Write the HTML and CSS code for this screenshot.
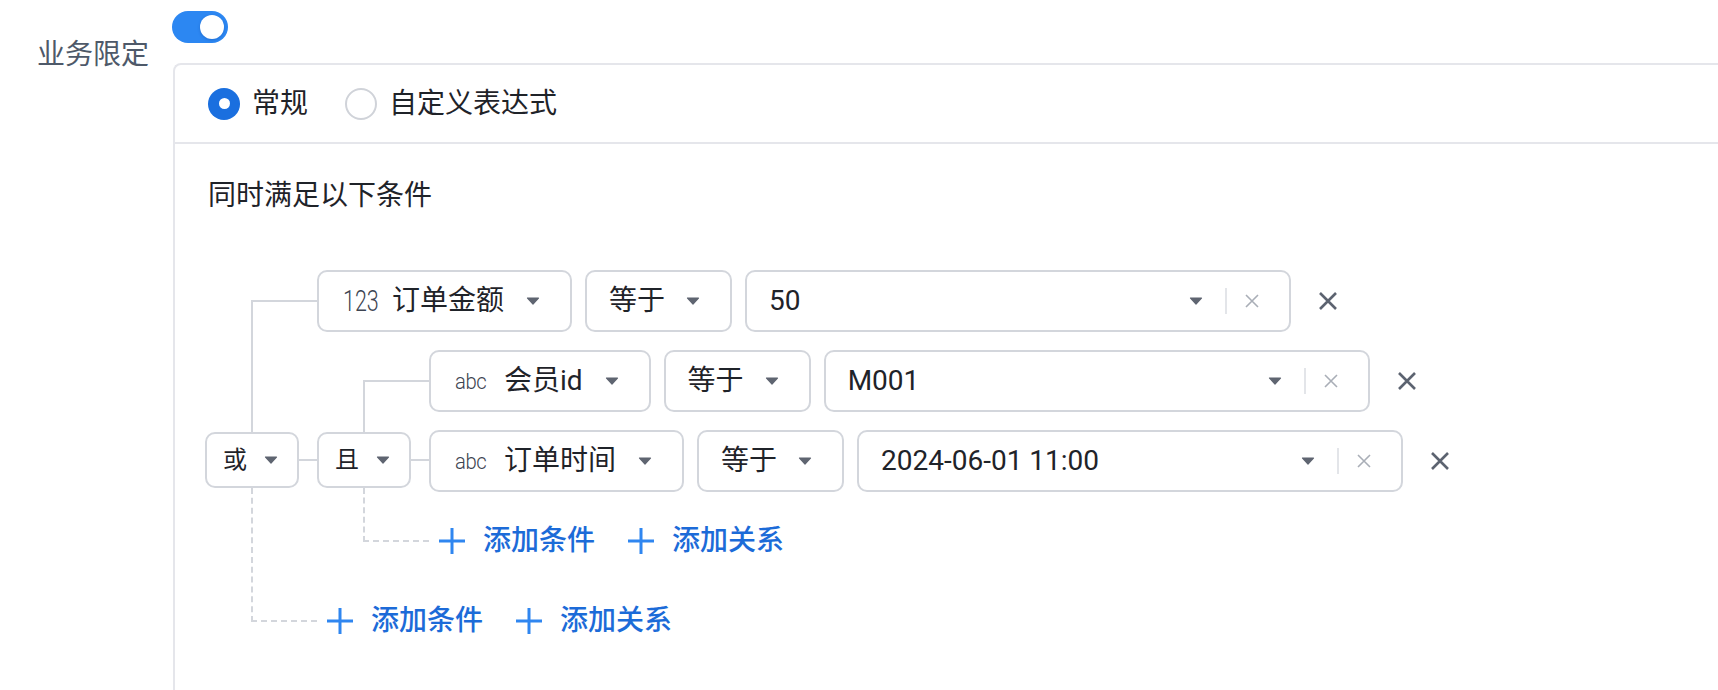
FILE: index.html
```html
<!DOCTYPE html>
<html lang="zh-CN">
<head>
<meta charset="utf-8">
<title>业务限定</title>
<link rel="stylesheet" href="styles.css">
</head>
<body>
<div class="page">
  <div class="label">业务限定</div>
  <div class="content">
    <div class="switch"><span class="knob"></span></div>
    <div class="panel">
      <div class="mode-row">
        <label class="radio checked"><span class="dot"></span><span class="radio-text">常规</span></label>
        <label class="radio"><span class="dot"></span><span class="radio-text">自定义表达式</span></label>
      </div>
      <div class="panel-body">
        <div class="title">同时满足以下条件</div>
        <div class="tree">
          <div class="group root">
            <div class="rel-col">
              <div class="select rel"><span class="rel-text">或</span><svg class="caret" viewBox="0 0 14 8"><path d="M1.5 1 H12.5 L7 7 Z"/></svg></div>
              <span class="rel-link"></span>
            </div>
            <div class="children">
              <div class="row">
                <div class="select field"><span class="tag"><span class="tag-num">123</span></span><span class="name">订单金额</span><svg class="caret" viewBox="0 0 14 8"><path d="M1.5 1 H12.5 L7 7 Z"/></svg></div>
                <div class="select op"><span class="name">等于</span><svg class="caret" viewBox="0 0 14 8"><path d="M1.5 1 H12.5 L7 7 Z"/></svg></div>
                <div class="select value"><span class="val">50</span><svg class="caret" viewBox="0 0 14 8"><path d="M1.5 1 H12.5 L7 7 Z"/></svg><span class="vsep"></span><svg class="clear" viewBox="0 0 16 16"><path d="M2 2 L14 14 M14 2 L2 14"/></svg></div>
                <svg class="remove" viewBox="0 0 20 20"><path d="M2 2 L18 18 M18 2 L2 18"/></svg>
              </div>
              <div class="group">
                <div class="rel-col">
                  <div class="select rel"><span class="rel-text">且</span><svg class="caret" viewBox="0 0 14 8"><path d="M1.5 1 H12.5 L7 7 Z"/></svg></div>
                  <span class="rel-link"></span>
                </div>
                <div class="children">
                  <div class="row">
                    <div class="select field"><span class="tag"><span class="tag-abc">abc</span></span><span class="name">会员id</span><svg class="caret" viewBox="0 0 14 8"><path d="M1.5 1 H12.5 L7 7 Z"/></svg></div>
                    <div class="select op"><span class="name">等于</span><svg class="caret" viewBox="0 0 14 8"><path d="M1.5 1 H12.5 L7 7 Z"/></svg></div>
                    <div class="select value"><span class="val">M001</span><svg class="caret" viewBox="0 0 14 8"><path d="M1.5 1 H12.5 L7 7 Z"/></svg><span class="vsep"></span><svg class="clear" viewBox="0 0 16 16"><path d="M2 2 L14 14 M14 2 L2 14"/></svg></div>
                    <svg class="remove" viewBox="0 0 20 20"><path d="M2 2 L18 18 M18 2 L2 18"/></svg>
                  </div>
                  <div class="row">
                    <div class="select field"><span class="tag"><span class="tag-abc">abc</span></span><span class="name">订单时间</span><svg class="caret" viewBox="0 0 14 8"><path d="M1.5 1 H12.5 L7 7 Z"/></svg></div>
                    <div class="select op"><span class="name">等于</span><svg class="caret" viewBox="0 0 14 8"><path d="M1.5 1 H12.5 L7 7 Z"/></svg></div>
                    <div class="select value"><span class="val">2024-06-01 11:00</span><svg class="caret" viewBox="0 0 14 8"><path d="M1.5 1 H12.5 L7 7 Z"/></svg><span class="vsep"></span><svg class="clear" viewBox="0 0 16 16"><path d="M2 2 L14 14 M14 2 L2 14"/></svg></div>
                    <svg class="remove" viewBox="0 0 20 20"><path d="M2 2 L18 18 M18 2 L2 18"/></svg>
                  </div>
                  <div class="add-row">
                    <span class="add"><svg class="plus" viewBox="0 0 26 26"><path d="M13 0 V26 M0 13 H26"/></svg><span>添加条件</span></span>
                    <span class="add"><svg class="plus" viewBox="0 0 26 26"><path d="M13 0 V26 M0 13 H26"/></svg><span>添加关系</span></span>
                  </div>
                </div>
              </div>
              <div class="add-row outer">
                <span class="add"><svg class="plus" viewBox="0 0 26 26"><path d="M13 0 V26 M0 13 H26"/></svg><span>添加条件</span></span>
                <span class="add"><svg class="plus" viewBox="0 0 26 26"><path d="M13 0 V26 M0 13 H26"/></svg><span>添加关系</span></span>
              </div>
            </div>
          </div>
        </div>
      </div>
    </div>
  </div>
</div>
</body>
</html>
```

FILE: styles.css
```css
html, body {
  margin: 0;
  padding: 0;
  background: #ffffff;
  overflow: hidden;
}
body {
  font-family: Roboto, "Noto Sans CJK SC", sans-serif;
  font-size: 28px;
  line-height: 40px;
  color: #1f2329;
}
.page {
  display: flex;
  padding: 11px 0 0 37px;
  height: 760px;
  box-sizing: border-box;
}
.label {
  width: 136px;
  flex: none;
  margin-top: 24px;
  color: #4e5969;
}
.content {
  flex: 1;
  display: flex;
  flex-direction: column;
}
.switch {
  width: 56px;
  height: 32px;
  border-radius: 16px;
  background: #2c87f2;
  display: flex;
  align-items: center;
  justify-content: flex-end;
  padding-right: 4px;
  box-sizing: border-box;
  margin-left: -1px;
}
.knob {
  width: 24px;
  height: 24px;
  border-radius: 50%;
  background: #ffffff;
  box-shadow: 0 1px 3px rgba(0, 40, 120, 0.25);
}
.panel {
  margin-top: 20px;
  flex: 1;
  border: 2px solid #e5e6eb;
  border-right: none;
  border-bottom: none;
  border-top-left-radius: 8px;
  margin-right: -20px;
}
.mode-row {
  height: 77px;
  display: flex;
  align-items: center;
  padding-left: 33px;
  border-bottom: 2px solid #e5e6eb;
  gap: 37px;
}
.radio {
  display: flex;
  align-items: center;
  gap: 12px;
}
.dot {
  width: 32px;
  height: 32px;
  border-radius: 50%;
  box-sizing: border-box;
  border: 2px solid #d0d3d9;
  background: #ffffff;
  display: flex;
  align-items: center;
  justify-content: center;
}
.radio.checked .dot {
  border: none;
  background: #1a6fdf;
}
.radio.checked .dot::after {
  content: "";
  width: 11px;
  height: 11px;
  border-radius: 50%;
  background: #ffffff;
}
.panel-body {
  padding: 32px 0 0 33px;
}
.title {
  height: 40px;
}
.tree {
  margin-top: 54px;
  margin-left: -3px;
}
.group {
  display: flex;
  align-items: stretch;
}
.rel-col {
  position: relative;
  display: flex;
  align-items: center;
  margin-right: 18px;
  flex: none;
}
.rel-col::before {
  content: "";
  position: absolute;
  left: 46px;
  top: 30px;
  bottom: calc(50% + 28px);
  width: 64px;
  border-left: 2px solid #d3d6dc;
  border-top: 2px solid #d3d6dc;
}
.rel-col::after {
  content: "";
  position: absolute;
  left: 46px;
  top: calc(50% + 28px);
  bottom: 27px;
  width: 64px;
  border-left: 2px dashed #d3d6dc;
  border-bottom: 2px dashed #d3d6dc;
}
.rel-link {
  position: absolute;
  left: 94px;
  width: 18px;
  top: calc(50% - 1px);
  height: 2px;
  background: #d3d6dc;
}
.children {
  display: flex;
  flex-direction: column;
  gap: 18px;
}
.row {
  display: flex;
  align-items: center;
  gap: 13px;
  height: 62px;
}
.select {
  box-sizing: border-box;
  height: 62px;
  border: 2px solid #d3d6dc;
  border-radius: 10px;
  display: flex;
  align-items: center;
  background: #ffffff;
  flex: none;
}
.caret {
  width: 14px;
  height: 8px;
  flex: none;
}
.caret path {
  fill: #5f6571;
  stroke: #5f6571;
  stroke-width: 1.2;
  stroke-linejoin: round;
}
.select.rel {
  height: 56px;
  width: 94px;
  padding: 0 21px 0 16px;
  font-size: 24px;
}
.rel-text {
  width: 24px;
  margin-right: 17px;
}
.select.field {
  padding: 0 30px 0 24px;
}
.tag {
  width: 36px;
  margin-right: 13px;
  flex: none;
  color: #3d4451;
  overflow: visible;
  white-space: nowrap;
}
.tag-num {
  display: inline-block;
  font-weight: 300;
  font-size: 29px;
  transform: scaleX(0.74);
  transform-origin: left center;
}
.tag-abc {
  display: inline-block;
  font-weight: 300;
  font-size: 22px;
  transform: scaleX(0.92);
  transform-origin: left center;
  letter-spacing: -0.4px;
}
.name {
  margin-right: 22px;
  white-space: nowrap;
}
.select.op {
  padding: 0 30px 0 22px;
}
.select.op .name {
  margin-right: 21px;
}
.select.value {
  width: 546px;
  padding: 0 29px 0 22px;
}
.val {
  flex: 1;
  white-space: nowrap;
}
.vsep {
  width: 2px;
  height: 26px;
  background: #e3e5e9;
  margin: 0 17px 0 22px;
  flex: none;
}
.clear {
  width: 16px;
  height: 16px;
  flex: none;
}
.clear path {
  stroke: #a9aeb7;
  stroke-width: 1.6;
  fill: none;
}
.remove {
  width: 20px;
  height: 20px;
  margin-left: 14px;
  flex: none;
}
.remove path {
  stroke: #5c6370;
  stroke-width: 2.6;
  fill: none;
}
.add-row {
  height: 56px;
  margin-top: 3px;
  padding-left: 10px;
  display: flex;
  align-items: center;
  gap: 33px;
}
.add-row.outer {
  margin-top: 6px;
}
.add {
  display: flex;
  align-items: center;
  gap: 18px;
  color: #1c6bd8;
  font-weight: 500;
}
.plus {
  width: 26px;
  height: 26px;
  flex: none;
}
.plus path {
  stroke: #2f86f0;
  stroke-width: 3;
  fill: none;
}
```
